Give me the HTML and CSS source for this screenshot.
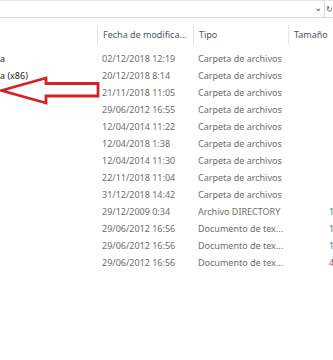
FILE: index.html
```html
<!DOCTYPE html>
<html lang="es">
<head>
    <meta charset="UTF-8">
    <title>Explorador</title>
    <link rel="stylesheet" href="styles.css">
</head>
<body>
<div class="window">
    <div class="address">
        <div class="address-field"><span class="chevron">&#8964;</span></div>
        <div class="refresh">&#8635;</div>
    </div>

    <div class="list">
        <div class="row head">
            <div class="col name"></div>
            <div class="col date">Fecha de modifica...</div>
            <div class="col type">Tipo</div>
            <div class="col size">Tamaño</div>
        </div>
        <div class="rows">
            <div class="row"><div class="col name">a</div><div class="col date">02/12/2018 12:19</div><div class="col type">Carpeta de archivos</div><div class="col size"></div></div>
            <div class="row"><div class="col name">a (x86)</div><div class="col date">20/12/2018 8:14</div><div class="col type">Carpeta de archivos</div><div class="col size"></div></div>
            <div class="row"><div class="col name"></div><div class="col date">21/11/2018 11:05</div><div class="col type">Carpeta de archivos</div><div class="col size"></div></div>
            <div class="row"><div class="col name"></div><div class="col date">29/06/2012 16:55</div><div class="col type">Carpeta de archivos</div><div class="col size"></div></div>
            <div class="row"><div class="col name"></div><div class="col date">12/04/2014 11:22</div><div class="col type">Carpeta de archivos</div><div class="col size"></div></div>
            <div class="row"><div class="col name"></div><div class="col date">12/04/2018 1:38</div><div class="col type">Carpeta de archivos</div><div class="col size"></div></div>
            <div class="row"><div class="col name"></div><div class="col date">12/04/2014 11:30</div><div class="col type">Carpeta de archivos</div><div class="col size"></div></div>
            <div class="row"><div class="col name"></div><div class="col date">22/11/2018 11:04</div><div class="col type">Carpeta de archivos</div><div class="col size"></div></div>
            <div class="row"><div class="col name"></div><div class="col date">31/12/2018 14:42</div><div class="col type">Carpeta de archivos</div><div class="col size"></div></div>
            <div class="row"><div class="col name"></div><div class="col date">29/12/2009 0:34</div><div class="col type">Archivo DIRECTORY</div><div class="col size num">1</div></div>
            <div class="row"><div class="col name"></div><div class="col date">29/06/2012 16:56</div><div class="col type">Documento de tex...</div><div class="col size num">1</div></div>
            <div class="row"><div class="col name"></div><div class="col date">29/06/2012 16:56</div><div class="col type">Documento de tex...</div><div class="col size num">1</div></div>
            <div class="row"><div class="col name"></div><div class="col date">29/06/2012 16:56</div><div class="col type">Documento de tex...</div><div class="col size num">4</div></div>
        </div>
    </div>

    <!-- flecha roja encima de la lista -->
    <svg class="arrow" width="110" height="40" viewBox="0 70 110 40">
        <polygon points="1.5,90.5 46,78 46,83.5 98,83.5 98,96 46,96 46,103" fill="none" stroke="#d3202b" stroke-width="2.8" stroke-linejoin="miter"/>
    </svg>
</div>
</body>
</html>
```

FILE: styles.css
```css
body {
    margin: 0;
    padding: 0;
    background-color: white;
    font-family: "Noto Sans", "Open Sans", sans-serif;
    font-size: 9px;
    overflow: hidden;
}
.window {
    position: relative;
    width: 333px;
    height: 360px;
    overflow: hidden;
}
.address {
    display: flex;
    height: 16px;
    border-top: 1px solid #e6e6e6;
    border-bottom: 1px solid #d9d9d9;
}
.address-field {
    flex: 1;
    display: flex;
    justify-content: flex-end;
    align-items: center;
    padding-right: 2px;
    border-right: 1px solid #d9d9d9;
}
.chevron {
    color: #555;
    font-size: 10px;
    line-height: 10px;
    margin-top: -4px;
}
.refresh {
    width: 7px;
    color: #555;
    font-size: 8px;
    line-height: 16px;
    padding-left: 1px;
}
.list {
    padding-top: 7px;
}
.row {
    display: flex;
    height: 17px;
    line-height: 17px;
    white-space: nowrap;
}
.row.head {
    height: 20px;
    line-height: 20px;
    margin-bottom: 5px;
}
.col {
    flex-shrink: 0;
    box-sizing: border-box;
    padding-left: 5px;
    overflow: hidden;
}
.name {
    width: 97px;
    padding-left: 0;
    color: #1a1a1a;
}
.date {
    width: 96px;
    color: #6d6d6d;
}
.type {
    width: 95px;
    color: #6d6d6d;
}
.size {
    width: 45px;
    color: #6d6d6d;
}
.size.num {
    padding-left: 41px;
}
.head .col {
    color: #4d5563;
    border-left: 1px solid #e5e5e5;
}
.head .name {
    border-left: none;
}
.arrow {
    position: absolute;
    left: 0;
    top: 70px;
}
```
